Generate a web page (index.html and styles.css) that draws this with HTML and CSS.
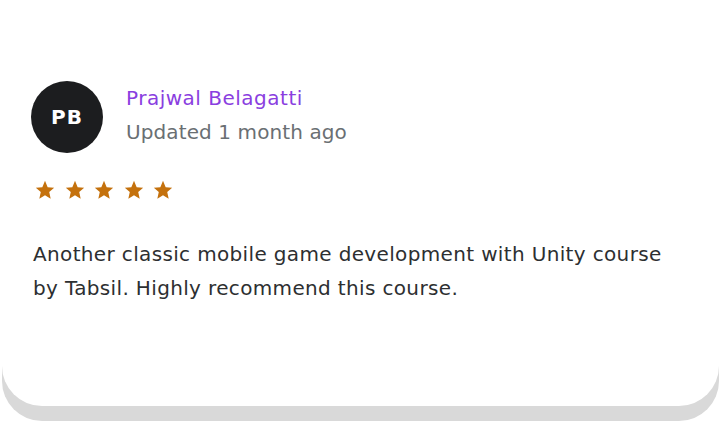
FILE: index.html
```html
<!DOCTYPE html>
<html lang="en">
  <head>
    <meta charset="UTF-8" />
    <meta name="viewport" content="width=device-width, initial-scale=1.0" />
    <title>Review</title>
    <link rel="stylesheet" href="styles.css">
  </head>
  <body>
    <div class="review-card">
      <div class="reviewer">
        <div class="avatar">PB</div>
        <div class="reviewer-info">
          <div class="name">Prajwal Belagatti</div>
          <div class="updated">Updated 1 month ago</div>
        </div>
      </div>
      <div class="stars">
        <svg class="star" viewBox="0 0 24 24"><path d="M12 2l2.9 6.9 7.1.6-5.4 4.7 1.6 7.3L12 17.7 5.8 21.5l1.6-7.3L2 9.5l7.1-.6z"/></svg>
        <svg class="star" viewBox="0 0 24 24"><path d="M12 2l2.9 6.9 7.1.6-5.4 4.7 1.6 7.3L12 17.7 5.8 21.5l1.6-7.3L2 9.5l7.1-.6z"/></svg>
        <svg class="star" viewBox="0 0 24 24"><path d="M12 2l2.9 6.9 7.1.6-5.4 4.7 1.6 7.3L12 17.7 5.8 21.5l1.6-7.3L2 9.5l7.1-.6z"/></svg>
        <svg class="star" viewBox="0 0 24 24"><path d="M12 2l2.9 6.9 7.1.6-5.4 4.7 1.6 7.3L12 17.7 5.8 21.5l1.6-7.3L2 9.5l7.1-.6z"/></svg>
        <svg class="star" viewBox="0 0 24 24"><path d="M12 2l2.9 6.9 7.1.6-5.4 4.7 1.6 7.3L12 17.7 5.8 21.5l1.6-7.3L2 9.5l7.1-.6z"/></svg>
      </div>
      <p class="review-text">Another classic mobile game development with Unity course by Tabsil. Highly recommend this course.</p>
    </div>
  </body>
</html>
```

FILE: styles.css
```css
body {
  margin: 0;
  background-color: #fff;
  font-family: "DejaVu Sans", Verdana, sans-serif;
  height: 422px;
  overflow: hidden;
}
.review-card {
  margin: 0 1px 0 2px;
  height: 406px;
  box-sizing: border-box;
  padding: 81px 32px 0 30px;
  background-color: #fff;
  border-radius: 0 0 40px 40px;
  box-shadow: 0 15px 0 #d9d9d9;
}
.reviewer {
  display: flex;
  align-items: center;
  gap: 23px;
}
.avatar {
  width: 72px;
  height: 72px;
  flex-shrink: 0;
  margin-left: -1px;
  border-radius: 50%;
  background-color: #1c1d1f;
  color: #fff;
  font-weight: 700;
  font-size: 20px;
  display: flex;
  align-items: center;
  justify-content: center;
  letter-spacing: 1px;
}
.reviewer-info {
  display: flex;
  flex-direction: column;
  gap: 10px;
  margin-top: -4px;
}
.name {
  color: #8a3ee0;
  font-size: 20px;
  line-height: 24px;
  letter-spacing: 0.5px;
}
.updated {
  color: #6a6f73;
  font-size: 20px;
  line-height: 24px;
  letter-spacing: 0.1px;
}
.stars {
  display: flex;
  gap: 7.5px;
  margin: 26px 0 0 2px;
}
.star {
  width: 22px;
  height: 22px;
  fill: #c4710d;
}
.review-text {
  margin: 36px 0 0 1px;
  font-size: 20px;
  line-height: 34px;
  letter-spacing: 0.35px;
  color: #2d2f31;
}
```
